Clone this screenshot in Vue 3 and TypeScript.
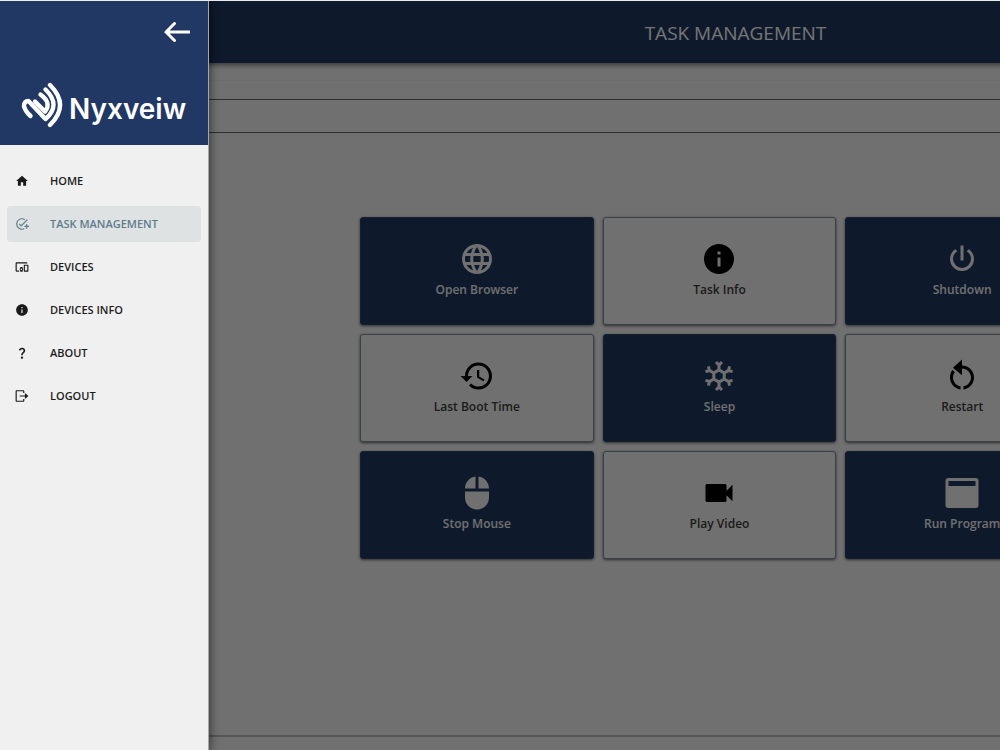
<script setup lang="ts">
import { ref } from 'vue'

interface NavItem {
  label: string
  icon: string
}

interface Task {
  label: string
  icon: string
  dark: boolean
}

const icons: Record<string, string> = {
  home: 'M10 20v-6h4v6h5v-8h3L12 3 2 12h3v8z',
  addTask:
    'M22 5.18L10.59 16.6l-4.24-4.24 1.41-1.41 2.83 2.83 10-10L22 5.18zM12 20c-4.41 0-8-3.59-8-8s3.59-8 8-8c1.57 0 3.04.46 4.28 1.25l1.45-1.45C16.1 2.67 14.13 2 12 2 6.48 2 2 6.48 2 12s4.48 10 10 10c1.73 0 3.36-.44 4.78-1.22l-1.5-1.5c-1 .46-2.11.72-3.28.72zm7-5h-3v2h3v3h2v-3h3v-2h-3v-3h-2v3z',
  devices:
    'M3 6h18V4H3c-1.1 0-2 .9-2 2v12c0 1.1.9 2 2 2h4v-2H3V6zm10 6H9v1.78c-.61.55-1 1.33-1 2.22s.39 1.67 1 2.22V20h4v-1.78c.61-.55 1-1.34 1-2.22s-.39-1.67-1-2.22V12zm-2 5.5c-.83 0-1.5-.67-1.5-1.5s.67-1.5 1.5-1.5 1.5.67 1.5 1.5-.67 1.5-1.5 1.5zM22 8h-6c-.5 0-1 .5-1 1v10c0 .5.5 1 1 1h6c.5 0 1-.5 1-1V9c0-.5-.5-1-1-1zm-1 10h-4v-8h4v8z',
  info: 'M12 2C6.48 2 2 6.48 2 12s4.48 10 10 10 10-4.48 10-10S17.52 2 12 2zm1 15h-2v-6h2v6zm0-8h-2V7h2v2z',
  question:
    'M11.07 12.85c.77-1.39 2.25-2.21 3.11-3.44.91-1.29.4-3.7-2.18-3.7-1.69 0-2.52 1.28-2.87 2.34L6.54 6.96C7.25 4.83 9.18 3 11.99 3c2.35 0 3.96 1.07 4.78 2.41.7 1.15 1.11 3.3.03 4.9-1.2 1.77-2.35 2.31-2.97 3.45-.25.46-.35.76-.35 2.24h-2.89c-.01-.78-.13-2.05.48-3.15zM14 20c0 1.1-.9 2-2 2s-2-.9-2-2 .9-2 2-2 2 .9 2 2z',
  logout:
    'M3 2h11c1.1 0 2 .9 2 2v3h-2V4H3v16h11v-3h2v3c0 1.1-.9 2-2 2H3c-1.1 0-2-.9-2-2V4c0-1.1.9-2 2-2zM8 11h9V7l6 5-6 5v-4H8z',
  globe:
    'M11.99 2C6.47 2 2 6.48 2 12s4.47 10 9.99 10C17.52 22 22 17.52 22 12S17.52 2 11.99 2zm6.93 6h-2.95c-.32-1.25-.78-2.45-1.38-3.56 1.84.63 3.37 1.91 4.33 3.56zM12 4.04c.83 1.2 1.48 2.53 1.91 3.96h-3.82c.43-1.43 1.08-2.76 1.91-3.96zM4.26 14C4.1 13.36 4 12.69 4 12s.1-1.36.26-2h3.38c-.08.66-.14 1.32-.14 2s.06 1.34.14 2H4.26zm.82 2h2.95c.32 1.25.78 2.45 1.38 3.56-1.84-.63-3.37-1.9-4.33-3.56zm2.95-8H5.08c.96-1.66 2.49-2.93 4.33-3.56C8.81 5.55 8.35 6.75 8.03 8zM12 19.96c-.83-1.2-1.48-2.53-1.91-3.96h3.82c-.43 1.43-1.08 2.76-1.91 3.96zM14.34 14H9.66c-.09-.66-.16-1.32-.16-2s.07-1.35.16-2h4.68c.09.65.16 1.32.16 2s-.07 1.34-.16 2zm.25 5.56c.6-1.11 1.06-2.31 1.38-3.56h2.95c-.96 1.65-2.49 2.93-4.33 3.56zM16.36 14c.08-.66.14-1.32.14-2s-.06-1.34-.14-2h3.38c.16.64.26 1.31.26 2s-.1 1.36-.26 2h-3.38z',
  power:
    'M16.56,5.44L15.11,6.89C16.84,7.94 18,9.83 18,12A6,6 0 0,1 12,18A6,6 0 0,1 6,12C6,9.83 7.16,7.94 8.88,6.88L7.44,5.44C5.36,6.88 4,9.28 4,12A8,8 0 0,0 12,20A8,8 0 0,0 20,12C20,9.28 18.64,6.88 16.56,5.44M13,3H11V13H13',
  history:
    'M13 3c-4.97 0-9 4.03-9 9H1l3.89 3.89.07.14L9 12H6c0-3.87 3.13-7 7-7s7 3.13 7 7-3.13 7-7 7c-1.93 0-3.68-.79-4.94-2.06l-1.42 1.42C8.27 19.99 10.51 21 13 21c4.97 0 9-4.03 9-9s-4.03-9-9-9zm-1 5v5l4.28 2.54.72-1.21-3.5-2.08V8H12z',
  snow: 'M20.79,13.95L18.46,14.57L16.46,13.44V10.56L18.46,9.43L20.79,10.05L21.31,8.12L19.54,7.65L20,5.88L18.07,5.36L17.45,7.69L15.45,8.82L13,7.38V5.12L14.71,3.41L13.29,2L12,3.29L10.71,2L9.29,3.41L11,5.12V7.38L8.5,8.82L6.5,7.69L5.92,5.36L4,5.88L4.47,7.65L2.7,8.12L3.22,10.05L5.55,9.43L7.55,10.56V13.45L5.55,14.58L3.22,13.96L2.7,15.89L4.47,16.36L4,18.12L5.93,18.64L6.55,16.31L8.55,15.18L11,16.62V18.88L9.29,20.59L10.71,22L12,20.71L13.29,22L14.7,20.59L13,18.88V16.62L15.5,15.17L17.5,16.3L18.12,18.63L20,18.12L19.53,16.35L21.3,15.88L20.79,13.95M9.5,10.56L12,9.11L14.5,10.56V13.44L12,14.89L9.5,13.44V10.56Z',
  restart:
    'M12 5V1L6 6.5l6 5V7c3.31 0 6 2.69 6 6 0 2.97-2.17 5.43-5 5.91v2.02c3.95-.49 7-3.85 7-7.93 0-4.42-3.58-8-8-8zm-6 8c0-1.65.67-3.15 1.26-3.74L5.64 8.04C4.6 9.2 4 10.99 4 13c0 4.08 3.05 7.44 7 7.93v-2.02c-2.83-.48-5-2.94-5-5.91z',
  mouse:
    'M13 1.07V9h7c0-4.08-3.05-7.44-7-7.93zM4 15c0 4.42 3.58 8 8 8s8-3.58 8-8v-4H4v4zm7-13.93C7.05 1.56 4 4.92 4 9h7V1.07z',
  video:
    'M17 10.5V7c0-.55-.45-1-1-1H4c-.55 0-1 .45-1 1v10c0 .55.45 1 1 1h12c.55 0 1-.45 1-1v-3.5l4 4v-11l-4 4z',
  program:
    'M3 2h18a2 2 0 0 1 2 2v16a2 2 0 0 1-2 2H3a2 2 0 0 1-2-2V4a2 2 0 0 1 2-2zM3 4v3.3h18V4z',
}

const navItems: NavItem[] = [
  { label: 'HOME', icon: 'home' },
  { label: 'TASK MANAGEMENT', icon: 'addTask' },
  { label: 'DEVICES', icon: 'devices' },
  { label: 'DEVICES INFO', icon: 'info' },
  { label: 'ABOUT', icon: 'question' },
  { label: 'LOGOUT', icon: 'logout' },
]

const tasks: Task[] = [
  { label: 'Open Browser', icon: 'globe', dark: true },
  { label: 'Task Info', icon: 'info', dark: false },
  { label: 'Shutdown', icon: 'power', dark: true },
  { label: 'Last Boot Time', icon: 'history', dark: false },
  { label: 'Sleep', icon: 'snow', dark: true },
  { label: 'Restart', icon: 'restart', dark: false },
  { label: 'Stop Mouse', icon: 'mouse', dark: true },
  { label: 'Play Video', icon: 'video', dark: false },
  { label: 'Run Program', icon: 'program', dark: true },
]

const active = ref('TASK MANAGEMENT')
const drawerOpen = ref(true)
</script>

<template>
  <div class="app">
    <div class="page">
      <header class="topbar">
        <button class="menu" type="button" aria-label="Open menu" @click="drawerOpen = true">
          <svg viewBox="0 0 24 24"><path d="M3 18h18v-2H3v2zm0-5h18v-2H3v2zm0-7v2h18V6H3z" /></svg>
        </button>
        <h1>TASK MANAGEMENT</h1>
      </header>
      <div class="strip"></div>
      <div class="band"></div>
      <main class="content">
        <div class="tasks">
          <button
            v-for="task in tasks"
            :key="task.label"
            type="button"
            class="task"
            :class="{ dark: task.dark }"
          >
            <svg viewBox="0 0 24 24"><path fill-rule="evenodd" :d="icons[task.icon]" /></svg>
            <span>{{ task.label }}</span>
          </button>
        </div>
      </main>
      <footer class="footer"></footer>
    </div>

    <div v-if="drawerOpen" class="scrim" @click="drawerOpen = false"></div>

    <aside v-if="drawerOpen" class="drawer">
      <div class="brand">
        <button class="back" type="button" aria-label="Close menu" @click="drawerOpen = false">
          <svg viewBox="0 0 26 20"><path d="M25 10H2M10.5 1.5L2 10l8.5 8.5" /></svg>
        </button>
        <div class="logo">
          <svg viewBox="0 0 44 46">
            <path d="M29 3Q49 23 29 43" />
            <path d="M24.5 7.5Q40.5 23 24.5 37L7.500 19Q3 19 3 24Q4 29 9.500 34" />
            <path d="M19.5 12.5Q31 21 24 29.5L14 19.500" />
          </svg>
          <span>Nyxveiw</span>
        </div>
      </div>
      <nav class="nav">
        <a
          v-for="item in navItems"
          :key="item.label"
          href="#"
          :class="{ active: item.label === active }"
          @click.prevent="active = item.label"
        >
          <svg viewBox="0 0 24 24"><path fill-rule="evenodd" :d="icons[item.icon]" /></svg>
          <span>{{ item.label }}</span>
        </a>
      </nav>
    </aside>
  </div>
</template>

<style>
body {
  margin: 0;
}
</style>

<style scoped>
.app {
  position: relative;
  box-sizing: border-box;
  min-height: 100vh;
  display: flex;
  overflow: hidden;
  border-top: 1px solid #e9eeec;
  background: #f4f4f4;
  font-family: 'Open Sans', 'Noto Sans', sans-serif;
}

button {
  font: inherit;
  cursor: pointer;
}

.page {
  flex: 1 0 auto;
  min-width: 1439px;
  display: flex;
  flex-direction: column;
}

.topbar {
  position: relative;
  display: flex;
  align-items: center;
  height: 62px;
  background: #1f3861;
  color: #fff;
  box-shadow: 0 2px 5px rgba(0, 0, 0, 0.5);
}

.topbar h1 {
  flex: 1;
  margin: 0;
  padding-top: 2px;
  text-align: center;
  font-size: 19px;
  line-height: 28px;
  font-weight: 400;
}

.menu {
  width: 32px;
  height: 32px;
  padding: 4px;
  border: 0;
  background: none;
}

.menu svg {
  display: block;
  fill: #fff;
}

.strip {
  height: 17px;
  border-bottom: 1px solid #eeeeee;
}

.band {
  height: 32px;
  margin-top: 18px;
  border-top: 1px solid #5f6666;
  border-bottom: 1px solid #5f6666;
}

.content {
  flex: 1;
  padding: 84px 0;
}

.tasks {
  display: grid;
  grid-template-columns: repeat(3, 1fr);
  gap: 9px;
  width: 719px;
  margin: 0 auto;
}

.task {
  display: flex;
  flex-direction: column;
  align-items: center;
  justify-content: center;
  height: 108px;
  padding: 0 0 2px;
  border: 1px solid #78909c;
  border-radius: 3px;
  background: #f4f4f4;
  color: #3c3c3c;
  font-size: 12px;
  line-height: 18px;
  font-weight: 600;
  box-shadow: 0 1px 3px rgba(0, 0, 0, 0.6);
}

.task svg {
  width: 36px;
  height: 36px;
  margin-bottom: 4px;
  fill: #000;
}

.task.dark {
  border-color: #2b4560;
  background: #1f3861;
  color: #f4f4f4;
}

.task.dark svg {
  fill: #f4f4f4;
}

.footer {
  height: 13px;
  border-top: 2px solid #bcbcbc;
}

.scrim {
  position: absolute;
  inset: 0;
  background: rgba(0, 0, 0, 0.54);
}

.drawer {
  position: absolute;
  top: 0;
  bottom: 0;
  left: 0;
  width: 208px;
  background: #f0f0f0;
  border-right: 1px solid #a5a7ab;
  box-shadow: 2px 0 8px rgba(0, 0, 0, 0.45);
}

.brand {
  display: flex;
  flex-direction: column;
  justify-content: space-between;
  box-sizing: border-box;
  height: 144px;
  padding: 18px 18px 17px 21px;
  background: #203863;
}

.back {
  align-self: flex-end;
  width: 26px;
  height: 26px;
  padding: 0;
  border: 0;
  background: none;
}

.back svg {
  display: block;
  width: 26px;
  height: 26px;
  fill: none;
  stroke: #fff;
  stroke-width: 3;
  stroke-linecap: round;
}

.logo {
  display: flex;
  align-items: center;
  gap: 4px;
  height: 46px;
  color: #fff;
  font-family: Inter, 'Open Sans', sans-serif;
  font-size: 28px;
  line-height: 28px;
  font-weight: 600;
}

.logo svg {
  flex: none;
  width: 44px;
  height: 46px;
  fill: none;
  stroke: #fff;
  stroke-width: 4.4;
  stroke-linecap: round;
  stroke-linejoin: round;
}

.logo span {
  padding-top: 8px;
}

.nav {
  display: flex;
  flex-direction: column;
  gap: 7px;
  padding: 18px 7px;
}

.nav a {
  display: flex;
  align-items: center;
  gap: 21px;
  height: 36px;
  padding: 0 8px;
  border-radius: 4px;
  color: #1c1c1c;
  font-size: 11px;
  line-height: 16px;
  font-weight: 600;
  text-decoration: none;
}

.nav svg {
  flex: none;
  width: 14px;
  height: 14px;
  fill: #1a1a1a;
}

.nav a.active {
  background: #dee2e3;
  color: #607d8b;
}

.nav a.active svg {
  fill: #607d8b;
}
</style>
